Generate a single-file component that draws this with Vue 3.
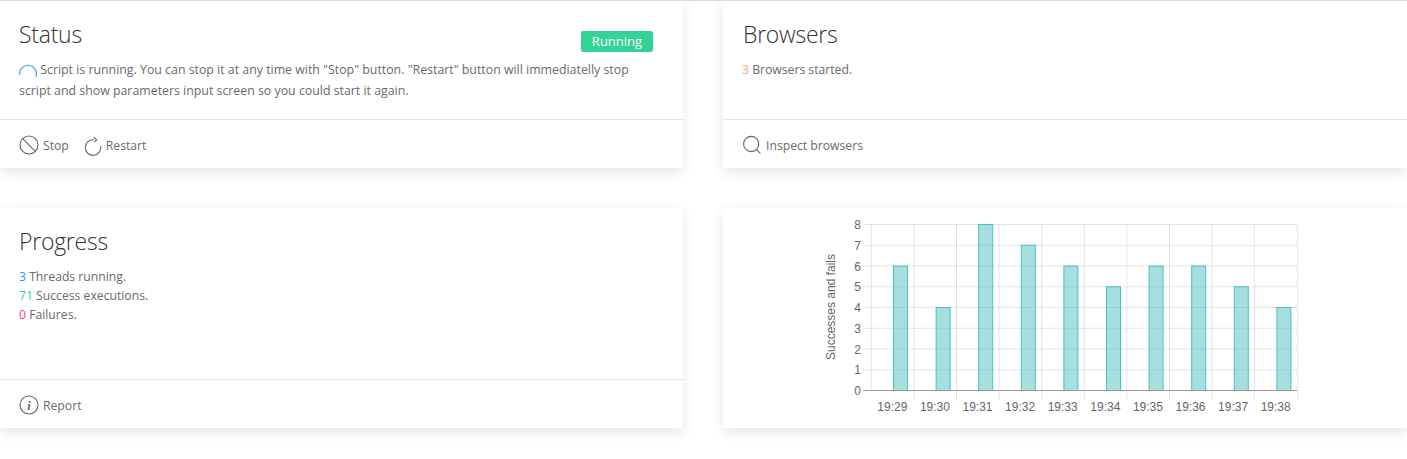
<script setup>
const cats = ['19:29','19:30','19:31','19:32','19:33','19:34','19:35','19:36','19:37','19:38']
const vals = [6,4,8,7,6,5,6,6,5,4]
const x0 = 871.3, y0 = 390.5, cw = 42.6, ch = 20.75
const bars = vals.map((v, i) => ({ x: x0 + cw * i + 22.2, y: y0 - v * ch, h: v * ch, v }))
const yt = [0,1,2,3,4,5,6,7,8]
</script>

<template>
  <div class="page">
    <section class="card">
      <div class="body">
        <div class="head">
          <h2>Status</h2>
          <span class="badge">Running</span>
        </div>
        <p class="text status-text"><svg class="spinner" width="18" height="18" viewBox="0 0 18 18"><path d="M.7 11A8.4 8.4 0 1 1 16.9 12.6" /></svg> Script is running. You can stop it at any time with "Stop" button. "Restart" button will immediatelly stop script and show parameters input screen so you could start it again.</p>
      </div>
      <div class="foot">
        <a class="action">
          <svg width="20" height="20" viewBox="0 0 20 20"><circle cx="10" cy="10" r="9" /><path d="M3.8 3.6 16.2 16.4" /></svg>
          <span>Stop</span>
        </a>
        <a class="action">
          <svg width="17" height="20" viewBox="0 0 17 20"><path d="M9 4.8A7.8 7.8 0 1 0 15.7 11" /><path d="M8.7 2.3 11.7 4.7 9.3 7.2" /></svg>
          <span>Restart</span>
        </a>
      </div>
    </section>

    <section class="card">
      <div class="body">
        <div class="head"><h2 class="offset">Browsers</h2></div>
        <p class="text"><span class="orange">3</span> Browsers started.</p>
      </div>
      <div class="foot">
        <a class="action">
          <svg width="20" height="20" viewBox="0 0 20 20"><circle cx="9.2" cy="9" r="7.6" /><path d="M14.6 14.6 18.4 18.4" /></svg>
          <span>Inspect browsers</span>
        </a>
      </div>
    </section>

    <section class="card tall">
      <div class="body">
        <div class="head"><h2>Progress</h2></div>
        <div class="text list">
          <div><span class="blue">3</span> Threads running.</div>
          <div><span class="green">71</span> Success executions.</div>
          <div><span class="red">0</span> Failures.</div>
        </div>
      </div>
      <div class="foot">
        <a class="action">
          <svg width="20" height="20" viewBox="0 0 20 20"><circle cx="10" cy="10" r="9" /><text x="10" y="14.5" text-anchor="middle" class="i">i</text></svg>
          <span>Report</span>
        </a>
      </div>
    </section>

    <section class="card tall chart-card">
      <svg class="chart" width="684" height="220" viewBox="723 208 684 220">
        <g class="grid">
          <line v-for="t in yt" :key="'h'+t" x1="863" x2="1297" :y1="y0 - t * ch" :y2="y0 - t * ch" />
          <line v-for="i in 11" :key="'v'+i" :x1="x0 + cw * (i - 1)" :x2="x0 + cw * (i - 1)" :y1="224" :y2="i === 1 ? 390 : 400.5" />
        </g>
        <g v-for="b in bars" :key="b.x">
          <rect class="bar" :x="b.x" :y="b.y" width="14" :height="b.h" />
        </g>
        <line class="base" x1="863" x2="1297" :y1="y0" :y2="y0" />
        <text v-for="t in yt" :key="'y'+t" class="tick" x="861" :y="y0 - t * ch + 4.5" text-anchor="end">{{ t }}</text>
        <text v-for="(c, i) in cats" :key="c" class="tick" :x="x0 + cw * i + 21" y="411" text-anchor="middle">{{ c }}</text>
        <text class="tick" transform="translate(835 307) rotate(-90)" text-anchor="middle">Successes and fails</text>
      </svg>
    </section>
  </div>
</template>

<style>
html, body { background: #fff; }
</style>

<style scoped>
.page {
  display: grid;
  grid-template-columns: 683px 684px;
  column-gap: 40px;
  row-gap: 40px;
  width: 1407px;
  height: 459px;
  align-content: start;
  border-top: 1px solid #dcdcdc;
  box-sizing: border-box;
  font-family: "Open Sans", "Liberation Sans", sans-serif;
  overflow: hidden;
}
.card {
  display: flex;
  flex-direction: column;
  height: 167px;
  background: #fff;
  box-shadow: 0 4px 12px rgba(0, 0, 0, .1);
}
.card.tall { height: 220px; }
.body { flex: 1; padding: 16px 30px 0 19px; box-sizing: border-box; }
.head { display: flex; justify-content: space-between; align-items: flex-start; height: 42px; }
.tall .head { height: 43px; }
h2 { margin: 0; font-size: 23px; line-height: 34px; font-weight: 300; letter-spacing: -.25px; color: #333; }
.offset { margin-left: 1px; }
.badge {
  margin-top: 14px;
  width: 72px;
  height: 21px;
  line-height: 21px;
  text-align: center;
  background: #33d396;
  border-radius: 2px;
  color: #fff;
  font-size: 13px;
}
.text { margin: 0; font-size: 12.2px; line-height: 21px; color: #6a6a6a; }
.status-text { font-size: 12.35px; }
.list { line-height: 19px; }
.spinner {
  fill: none;
  stroke: #5aaef0;
  stroke-width: 1.4;
  vertical-align: -4px;
  margin: -4px 0;
}
.orange { color: #f0a878; }
.blue { color: #2f95f5; }
.green { color: #33d396; }
.red { color: #f5476f; }
.foot {
  display: flex;
  gap: 16px;
  height: 49px;
  padding-left: 19px;
  padding-top: 2px;
  box-sizing: border-box;
  align-items: center;
  border-top: 1px solid #e3e3e3;
  flex: none;
}
.action { display: flex; align-items: center; gap: 4px; font-size: 12.2px; color: #6a6a6a; }
.action svg { fill: none; stroke: #666; stroke-width: 1.1; flex: none; overflow: visible; }
.action .i { font: italic 700 12px "Liberation Serif", serif; fill: #666; stroke: none; }
.chart { display: block; }
.grid line { stroke: #000; stroke-opacity: .1; stroke-width: 1; }
.base { stroke: #999; stroke-width: 1; }
.bar { fill: rgba(75, 192, 192, .5); stroke: #4bc0c0; stroke-width: 1; }
.tick { font: 12px "Liberation Sans", Arial, sans-serif; fill: #666; }
</style>
